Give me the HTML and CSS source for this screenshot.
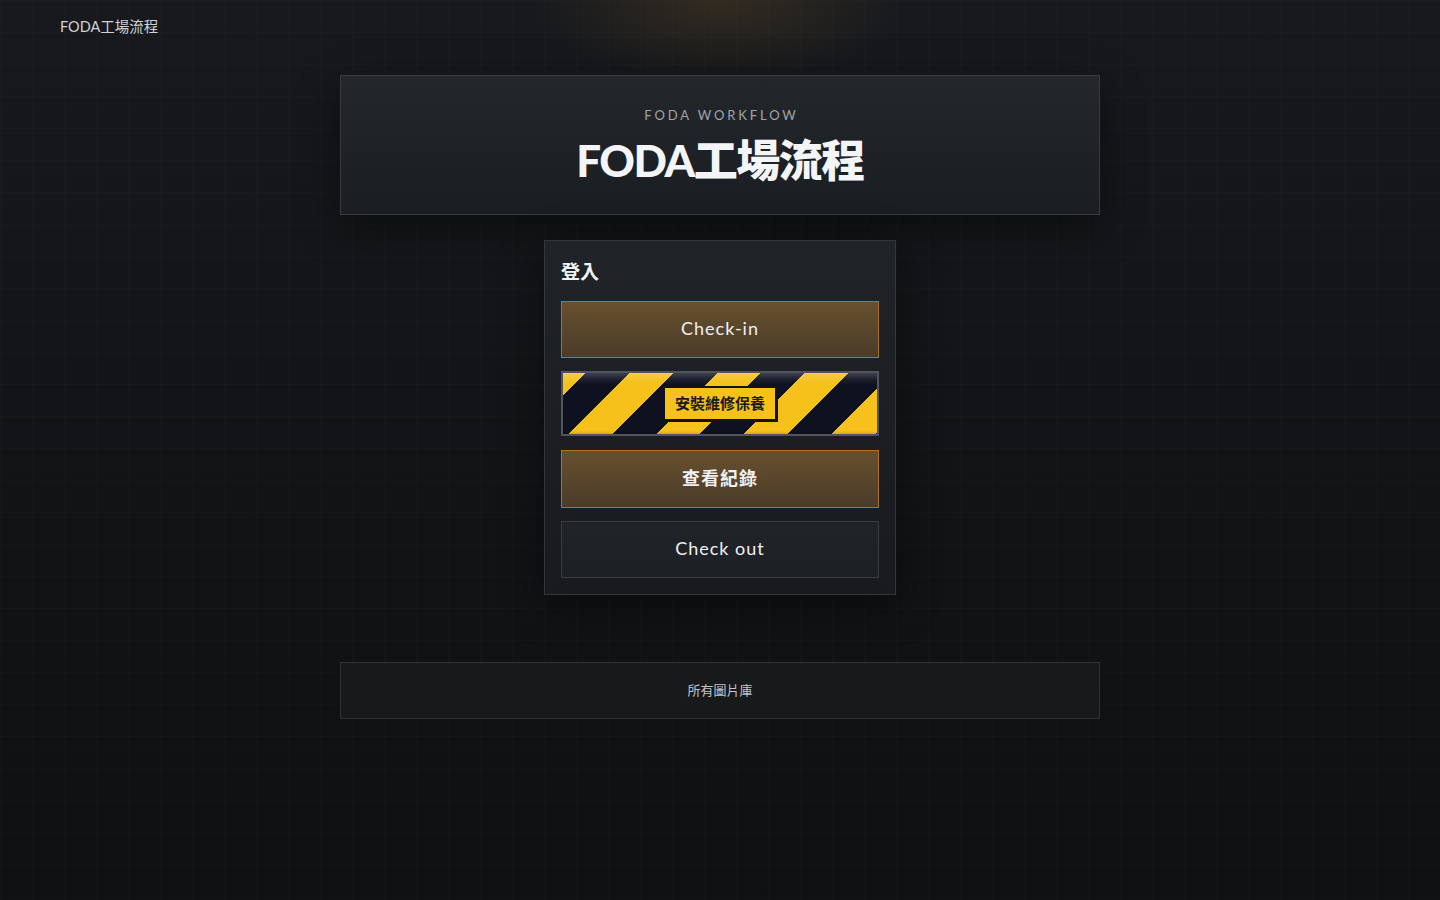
FILE: index.html
```html
<!DOCTYPE html>
<html lang="zh-Hant">
<head>
<meta charset="utf-8">
<title>FODA工場流程</title>
<link rel="stylesheet" href="styles.css">
</head>
<body>
<header class="topbar">FODA工場流程</header>
<main class="main">
  <section class="hero">
    <div class="hero-sub">FODA WORKFLOW</div>
    <h1 class="hero-title">FODA工場流程</h1>
  </section>
  <section class="login">
    <h2 class="login-title">登入</h2>
    <div class="actions">
      <button class="btn btn-amber btn-latin">Check-in</button>
      <button class="btn btn-hazard"><span class="hazard-label">安裝維修保養</span></button>
      <button class="btn btn-amber btn-cjk btn-tall">查看紀錄</button>
      <button class="btn btn-dark btn-latin">Check out</button>
    </div>
  </section>
  <a class="gallery" href="#">所有圖片庫</a>
</main>
</body>
</html>
```
FILE: styles.css
```css
* { box-sizing: border-box; }
html, body { margin: 0; padding: 0; }
body {
  min-height: 100vh;
  font-family: Lato, "Noto Sans CJK TC", "Noto Sans", sans-serif;
  color: #e8eaed;
  background-color: #111214;
  background-image:
    radial-gradient(ellipse 190px 80px at 720px 0px, rgba(120, 90, 45, 0.28), rgba(120, 90, 45, 0) 100%),
    linear-gradient(rgba(255,255,255,0.013) 1px, transparent 1px),
    linear-gradient(90deg, rgba(255,255,255,0.013) 1px, transparent 1px),
    linear-gradient(180deg, #17191d 0px, #131417 400px, #0f1011 900px);
  background-size: auto, 32px 32px, 32px 32px, auto;
  background-repeat: no-repeat, repeat, repeat, no-repeat;
}
.topbar {
  height: 52px;
  line-height: 52px;
  padding: 1px 60px 0;
  font-size: 14.5px;
  color: #d0d3d7;
}
.main {
  display: flex;
  flex-direction: column;
  align-items: center;
  padding-top: 23px;
}
.hero {
  width: 760px;
  height: 140px;
  border: 1px solid #373a3f;
  background: linear-gradient(180deg, #23272c 0%, #1a1d21 100%);
  box-shadow: 0 12px 40px rgba(0,0,0,0.45);
  display: flex;
  flex-direction: column;
  align-items: center;
  padding-top: 31px;
}
.hero-sub {
  font-size: 13px;
  line-height: 16px;
  letter-spacing: 2.9px;
  color: #a0a4aa;
  margin-right: -3px;
}
.hero-title {
  margin: 11px 0 0;
  font-size: 44px;
  line-height: 52px;
  font-weight: 900;
  letter-spacing: -1.5px;
  color: #f3f5f7;
  font-family: Lato, "Noto Sans CJK TC", sans-serif;
}
.login {
  margin-top: 25px;
  width: 352px;
  border: 1px solid #33363b;
  background: linear-gradient(180deg, #202328 0%, #181a1d 100%);
  box-shadow: 0 10px 40px rgba(0,0,0,0.45);
  padding: 16px;
}
.login-title {
  margin: 0 0 16px;
  font-size: 19px;
  line-height: 28px;
  font-weight: 700;
  color: #f1f3f5;
  font-family: "Noto Sans CJK TC", sans-serif;
}
.actions {
  display: flex;
  flex-direction: column;
  gap: 13px;
}
.btn {
  display: flex;
  align-items: center;
  justify-content: center;
  width: 100%;
  height: 57px;
  margin: 0;
  padding: 0;
  font-size: 18px;
  color: #eef0f2;
  cursor: pointer;
}
.btn-tall { height: 58px; }
.btn-latin {
  font-family: Lato, "Noto Sans CJK TC", sans-serif;
  letter-spacing: 1px;
  font-weight: 400;
  padding-bottom: 4px;
}
.btn-cjk {
  font-family: "Noto Sans CJK TC", sans-serif;
  font-weight: 700;
  letter-spacing: 1px;
  padding-bottom: 4px;
}
.btn-amber {
  border: 1px solid #a8722e;
  background: linear-gradient(180deg, #67502e 0%, #4a3b29 100%);
}
.btn-dark {
  border: 1px solid #3a3d42;
  background: linear-gradient(180deg, #202327 0%, #1d2024 100%);
}
.btn-hazard {
  height: 65px;
  margin-bottom: 1px;
  border: 2px solid #50545b;
  background:
    linear-gradient(180deg, rgba(255,255,255,0.2) 0px, rgba(255,255,255,0.05) 7px, rgba(255,255,255,0) 12px),
    linear-gradient(0deg, rgba(0,0,0,0.12) 0px, rgba(0,0,0,0) 3px),
    repeating-linear-gradient(135deg, #f5c11a 0px, #f5c11a 16px, #0e111f 16px, #0e111f 47px, #f5c11a 47px, #f5c11a 62px);
}
.hazard-label {
  display: inline-block;
  background: #f5c11a;
  border: 2px solid #121212;
  box-shadow: 1px 1px 0 #121212;
  padding: 0 10px;
  height: 35px;
  line-height: 30px;
  font-size: 15px;
  font-weight: 700;
  color: #1a1a1a;
  font-family: "Noto Sans CJK TC", sans-serif;
}
.gallery {
  margin-top: 67px;
  width: 760px;
  height: 57px;
  display: flex;
  align-items: center;
  justify-content: center;
  border: 1px solid #2f3135;
  background: #18191b;
  color: #c2c5c9;
  font-size: 13px;
  text-decoration: none;
  font-family: "Noto Sans CJK TC", sans-serif;
  padding-bottom: 2px;
}
```
